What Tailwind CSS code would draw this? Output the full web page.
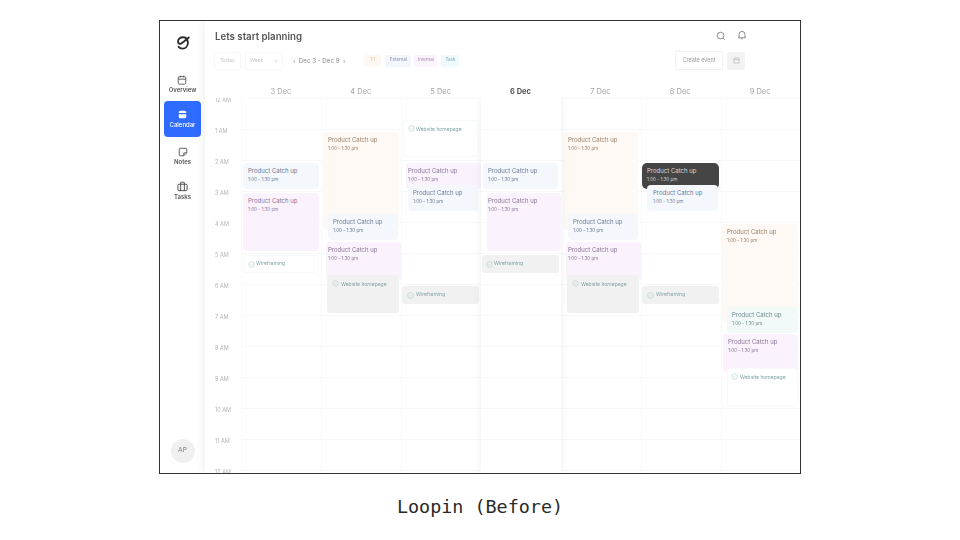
<!DOCTYPE html>
<html lang="en">
<head>
    <meta charset="UTF-8">
    <title>Loopin (Before)</title>
    <script src="https://cdn.jsdelivr.net/npm/@tailwindcss/browser@4"></script>
</head>
<body class="bg-white w-[960px] h-[540px] overflow-hidden font-['Inter',sans-serif]">
    <div class="pt-[20px] pl-[159px]">
        <!-- App frame -->
        <div class="w-[642px] h-[454px] border border-[#333] overflow-hidden">
            <div class="flex w-[640px] h-[452px] blur-[0.6px]">

                <!-- Sidebar -->
                <aside class="w-[45px] shrink-0 flex flex-col items-center">
                    <svg class="w-[16px] h-[16px] mt-[14px]" viewBox="0 0 16 16" fill="none" stroke="#2e2e2e" stroke-width="1.9" stroke-linecap="round">
                        <path d="M12.6 6.2C12.6 3.6 10.6 2.3 8 2.3 5.2 2.3 3 4 3 6.6c0 1.2.6 2 1.6 2.2C6.600 9.200 9.400 5.800 13.800 2.400"/>
                        <path d="M13 7.200c-.2 3.800-2.400 6.400-5.400 6.400-1.800 0-3.200-.6-4-1.800"/>
                    </svg>
                    <a class="mt-[24px] flex flex-col items-center text-[#555]">
                        <svg class="w-[10px] h-[10px]" viewBox="0 0 12 12" fill="none" stroke="#444" stroke-width="1">
                            <rect x="1.500" y="2" width="9" height="9" rx="1.500"/><path d="M1.500 5h9M4 .8v2M8 .8v2"/>
                        </svg>
                        <span class="text-[6px] leading-[8px] mt-[1px] font-semibold">Overview</span>
                    </a>
                    <a class="mt-[7px] w-[37px] h-[36px] rounded-[4px] bg-[#2f6bff] flex flex-col items-center justify-center text-white">
                        <svg class="w-[9px] h-[9px]" viewBox="0 0 12 12" fill="#fff">
                            <path d="M1 3a2 2 0 0 1 2-2h6a2 2 0 0 1 2 2v1H1zM1 5.500h10V9a2 2 0 0 1-2 2H3a2 2 0 0 1-2-2z"/>
                        </svg>
                        <span class="text-[6px] leading-[8px] mt-[2px] font-medium">Calendar</span>
                    </a>
                    <a class="mt-[10px] flex flex-col items-center text-[#555]">
                        <svg class="w-[10px] h-[10px]" viewBox="0 0 12 12" fill="none" stroke="#444" stroke-width="1">
                            <path d="M1.500 2.500a1 1 0 0 1 1-1h7a1 1 0 0 1 1 1V7l-3.500 3.500h-4.500a1 1 0 0 1-1-1zM10.500 7H7v3.500"/>
                        </svg>
                        <span class="text-[6px] leading-[8px] mt-[1px] font-semibold">Notes</span>
                    </a>
                    <a class="mt-[15px] flex flex-col items-center text-[#555]">
                        <svg class="w-[11px] h-[11px]" viewBox="0 0 12 12" fill="none" stroke="#444" stroke-width="1">
                            <rect x="1" y="3.500" width="10" height="7" rx="1.200"/><path d="M4 3.500V2a.7.7 0 0 1 .7-.7h2.600A.7.7 0 0 1 8 2v1.500M4 3.500v7M8 3.500v7"/>
                        </svg>
                        <span class="text-[6px] leading-[8px] mt-[1px] font-semibold">Tasks</span>
                    </a>
                    <div class="mt-auto mb-[10px] w-[24px] h-[24px] rounded-full bg-[#f0f0f0] flex items-center justify-center text-[6.500px] font-medium text-[#8a8a8a]">AP</div>
                </aside>

                <!-- Main -->
                <main class="flex-1 min-w-0 flex flex-col shadow-[-3px_0_8px_rgba(0,0,0,0.05)]">
                    <header class="h-[28px] shrink-0 flex items-center pl-[10px]">
                        <h1 class="text-[9.700px] font-semibold text-[#555] mt-[4px]">Lets start planning</h1>
                        <svg class="ml-auto w-[10px] h-[10px] mt-[2px] translate-x-[1px]" viewBox="0 0 12 12" fill="none" stroke="#777" stroke-width="1"><circle cx="5.500" cy="5.500" r="4"/><path d="M8.500 8.500l2 2"/></svg>
                        <svg class="ml-[12px] mr-[53px] w-[10px] h-[10px]" viewBox="0 0 12 12" fill="none" stroke="#777" stroke-width="1"><path d="M2.500 8.500V5.200a3.500 3.500 0 0 1 7 0v3.300l.8.800H1.700zM5 10.500h2"/></svg>
                    </header>
                    <div class="h-[19px] mt-[2px] shrink-0 flex items-center pl-[9px]">
                        <span class="w-[27px] h-[18px] border border-[#f7f7f7] rounded-[2px] flex items-center justify-center text-[5px] text-[#c4c4c4]">Today</span>
                        <span class="ml-[4px] w-[38px] h-[18px] border border-[#f7f7f7] rounded-[2px] flex items-center justify-between px-[4px] text-[5px] text-[#c4c4c4]">Week <svg class="w-[4px] h-[4px]" viewBox="0 0 6 6" fill="none" stroke="#aaa"><path d="M1 2l2 2 2-2"/></svg></span>
                        <span class="ml-[10px] text-[6.200px] text-[#888] whitespace-pre">‹  Dec 3 - Dec 9  ›</span>
                        <span class="ml-[19px] w-[17px] h-[12px] rounded-[2px] bg-[#fef8f3] flex items-center justify-center text-[4.500px] text-[#dcb690]">1:1</span>
                        <span class="ml-[4px] w-[26px] h-[12px] rounded-[2px] bg-[#f3f6fc] flex items-center justify-center text-[4.500px] text-[#7f8cab]">External</span>
                        <span class="ml-[3px] w-[23px] h-[12px] rounded-[2px] bg-[#fbf3fe] flex items-center justify-center text-[4.500px] text-[#a986b0]">Internal</span>
                        <span class="ml-[4px] w-[18px] h-[12px] rounded-[2px] bg-[#f0f9fb] flex items-center justify-center text-[4.500px] text-[#77abb5]">Task</span>
                        <span class="ml-auto w-[48px] h-[19px] border border-[#f1f1f1] rounded-[2px] flex items-center justify-center text-[5.500px] text-[#999]">Create event</span>
                        <span class="ml-[4px] mr-[55px] w-[18px] h-[18px] rounded-[2px] bg-[#f3f3f3] flex items-center justify-center">
                            <svg class="w-[7px] h-[7px]" viewBox="0 0 8 8" fill="none" stroke="#b4b4b4" stroke-width=".8"><rect x="1" y="1" width="6" height="6" rx="1"/><path d="M1 3h6"/></svg>
                        </span>
                    </div>

                    <!-- Day headers -->
                    <div class="h-[28px] shrink-0 flex pl-[36px] text-[7.500px] text-[#a5a5a5]">
                        <div class="w-[80px] pt-[17px] text-center leading-[10px]">3 Dec</div>
                        <div class="w-[80px] pt-[17px] text-center leading-[10px]">4 Dec</div>
                        <div class="w-[80px] pt-[17px] text-center leading-[10px]">5 Dec</div>
                        <div class="w-[80px] pt-[17px] text-center leading-[10px] font-bold text-[#555]">6 Dec</div>
                        <div class="w-[80px] pt-[17px] text-center leading-[10px]">7 Dec</div>
                        <div class="w-[80px] pt-[17px] text-center leading-[10px]">8 Dec</div>
                        <div class="w-[80px] pt-[17px] text-center leading-[10px]">9 Dec</div>
                    </div>

                    <!-- Week grid -->
                    <div class="flex-1 min-h-0 flex overflow-hidden">
                        <div class="w-[36px] shrink-0 text-[5.500px] text-[#b4b4b4] pl-[10px]">
                            <div class="h-[31px] leading-[5px]">12 AM</div>
                            <div class="h-[31px] leading-[5px]">1 AM</div>
                            <div class="h-[31px] leading-[5px]">2 AM</div>
                            <div class="h-[31px] leading-[5px]">3 AM</div>
                            <div class="h-[31px] leading-[5px]">4 AM</div>
                            <div class="h-[31px] leading-[5px]">5 AM</div>
                            <div class="h-[31px] leading-[5px]">6 AM</div>
                            <div class="h-[31px] leading-[5px]">7 AM</div>
                            <div class="h-[31px] leading-[5px]">8 AM</div>
                            <div class="h-[31px] leading-[5px]">9 AM</div>
                            <div class="h-[31px] leading-[5px]">10 AM</div>
                            <div class="h-[31px] leading-[5px]">11 AM</div>
                            <div class="h-[31px] leading-[5px]">12 AM</div>
                        </div>
                        <div class="relative w-[560px] shrink-0">
                            <!-- Hour lines -->
                            <div class="absolute inset-0 grid grid-rows-[repeat(13,31px)]">
                                <div class="border-t border-[#f8f8f8]"></div><div class="border-t border-[#f8f8f8]"></div><div class="border-t border-[#f8f8f8]"></div><div class="border-t border-[#f8f8f8]"></div><div class="border-t border-[#f8f8f8]"></div><div class="border-t border-[#f8f8f8]"></div><div class="border-t border-[#f8f8f8]"></div><div class="border-t border-[#f8f8f8]"></div><div class="border-t border-[#f8f8f8]"></div><div class="border-t border-[#f8f8f8]"></div><div class="border-t border-[#f8f8f8]"></div><div class="border-t border-[#f8f8f8]"></div><div class="border-t border-[#f8f8f8]"></div>
                            </div>
                            <div class="relative flex h-full">

                                <!-- 3 Dec -->
                                <div class="relative w-[80px] border-l border-[#f9f9f9]">
                                    <div class="absolute left-[1px] top-[65px] w-[76px] h-[26px] rounded-[4px] bg-[#f4f7fc] pl-[5px] pt-[4px]">
                                        <p class="text-[6px] leading-[8px] text-[#6d7a95] whitespace-nowrap">Product Catch up</p><p class="text-[4.500px] leading-[8px] mt-[1px] text-[#6d7a95] whitespace-nowrap">1:00 - 1:30 pm</p>
                                    </div>
                                    <div class="absolute left-[1px] top-[95px] w-[76px] h-[58px] rounded-[4px] bg-[#faf3fe] pl-[5px] pt-[4px]">
                                        <p class="text-[6px] leading-[8px] text-[#8b7595] whitespace-nowrap">Product Catch up</p><p class="text-[4.500px] leading-[8px] mt-[1px] text-[#8b7595] whitespace-nowrap">1:00 - 1:30 pm</p>
                                    </div>
                                    <div class="absolute left-[1px] top-[157px] w-[76px] h-[18px] rounded-[3px] bg-white border border-[#f6fafa] pl-[4px] flex items-center gap-[1px]">
                                        <svg class="w-[7px] h-[7px] shrink-0" viewBox="0 0 8 8" fill="none" stroke="#a9c9c6" stroke-width=".6"><circle cx="4" cy="4" r="3.200"/><path d="M2.500 4l1 1 2-2"/></svg>
                                        <span class="text-[5px] text-[#7fa4a2] whitespace-nowrap">Wireframing</span>
                                    </div>
                                </div>

                                <!-- 4 Dec -->
                                <div class="relative w-[80px] border-l border-[#f9f9f9]">
                                    <div class="absolute left-[1px] top-[34px] w-[76px] h-[98px] rounded-[4px] bg-[#fef9f5] pl-[5px] pt-[4px]">
                                        <p class="text-[6px] leading-[8px] text-[#9a7f65] whitespace-nowrap">Product Catch up</p><p class="text-[4.500px] leading-[8px] mt-[1px] text-[#9a7f65] whitespace-nowrap">1:00 - 1:30 pm</p>
                                    </div>
                                    <div class="absolute left-[6px] top-[116px] w-[70px] h-[26px] rounded-[4px] bg-[#f4f7fc] pl-[5px] pt-[4px]">
                                        <p class="text-[6px] leading-[8px] text-[#6d7a95] whitespace-nowrap">Product Catch up</p><p class="text-[4.500px] leading-[8px] mt-[1px] text-[#6d7a95] whitespace-nowrap">1:00 - 1:30 pm</p>
                                    </div>
                                    <div class="absolute left-[4px] top-[144px] w-[76px] h-[38px] rounded-[4px] bg-[#faf3fe] pl-[2px] pt-[4px]">
                                        <p class="text-[6px] leading-[8px] text-[#8b7595] whitespace-nowrap">Product Catch up</p><p class="text-[4.500px] leading-[8px] mt-[1px] text-[#8b7595] whitespace-nowrap">1:00 - 1:30 pm</p>
                                    </div>
                                    <div class="absolute left-[5px] top-[177px] w-[72px] h-[38px] rounded-[3px] bg-[#f1f1f1] pl-[5px] pt-[5px] flex items-start gap-[2px]">
                                        <svg class="w-[7px] h-[7px] shrink-0" viewBox="0 0 8 8" fill="none" stroke="#a9c9c6" stroke-width=".6"><circle cx="4" cy="4" r="3.200"/><path d="M2.500 4l1 1 2-2"/></svg>
                                        <span class="text-[5px] leading-[8px] text-[#7fa4a2] whitespace-nowrap">Website homepage</span>
                                    </div>
                                </div>

                                <!-- 5 Dec -->
                                <div class="relative w-[80px] border-l border-[#f9f9f9]">
                                    <div class="absolute left-[1px] top-[22px] w-[76px] h-[37px] rounded-[3px] bg-white border border-[#f6fafa] pl-[4px] pt-[4px] flex items-start gap-[1px]">
                                        <svg class="w-[7px] h-[7px] shrink-0" viewBox="0 0 8 8" fill="none" stroke="#a9c9c6" stroke-width=".6"><circle cx="4" cy="4" r="3.200"/><path d="M2.500 4l1 1 2-2"/></svg>
                                        <span class="text-[5px] leading-[8px] text-[#7fa4a2] whitespace-nowrap">Website homepage</span>
                                    </div>
                                    <div class="absolute left-[4px] top-[65px] w-[76px] h-[26px] rounded-[4px] bg-[#faf3fe] pl-[2px] pt-[4px]">
                                        <p class="text-[6px] leading-[8px] text-[#8b7595] whitespace-nowrap">Product Catch up</p><p class="text-[4.500px] leading-[8px] mt-[1px] text-[#8b7595] whitespace-nowrap">1:00 - 1:30 pm</p>
                                    </div>
                                    <div class="absolute left-[6px] top-[87px] w-[70px] h-[26px] rounded-[4px] bg-[#f4f7fc] pl-[5px] pt-[4px]">
                                        <p class="text-[6px] leading-[8px] text-[#6d7a95] whitespace-nowrap">Product Catch up</p><p class="text-[4.500px] leading-[8px] mt-[1px] text-[#6d7a95] whitespace-nowrap">1:00 - 1:30 pm</p>
                                    </div>
                                    <div class="absolute left-[0px] top-[188px] w-[77px] h-[18px] rounded-[3px] bg-[#f1f1f1] pl-[5px] flex items-center gap-[2px]">
                                        <svg class="w-[7px] h-[7px] shrink-0" viewBox="0 0 8 8" fill="none" stroke="#a9c9c6" stroke-width=".6"><circle cx="4" cy="4" r="3.200"/><path d="M2.500 4l1 1 2-2"/></svg>
                                        <span class="text-[5px] text-[#7fa4a2] whitespace-nowrap">Wireframing</span>
                                    </div>
                                </div>

                                <!-- 6 Dec, the current day sits raised -->
                                <div class="relative z-10 w-[80px] bg-white shadow-[0_0_8px_rgba(0,0,0,0.07)]">
                                    <div class="absolute left-0 right-0 top-[31px] border-t border-[#f8f8f8]"></div>
                                    <div class="absolute left-0 right-0 top-[62px] border-t border-[#f8f8f8]"></div>
                                    <div class="absolute left-0 right-0 top-[93px] border-t border-[#f8f8f8]"></div>
                                    <div class="absolute left-0 right-0 top-[124px] border-t border-[#f8f8f8]"></div>
                                    <div class="absolute left-0 right-0 top-[155px] border-t border-[#f8f8f8]"></div>
                                    <div class="absolute left-0 right-0 top-[186px] border-t border-[#f8f8f8]"></div>
                                    <div class="absolute left-0 right-0 top-[217px] border-t border-[#f8f8f8]"></div>
                                    <div class="absolute left-0 right-0 top-[248px] border-t border-[#f8f8f8]"></div>
                                    <div class="absolute left-0 right-0 top-[279px] border-t border-[#f8f8f8]"></div>
                                    <div class="absolute left-0 right-0 top-[310px] border-t border-[#f8f8f8]"></div>
                                    <div class="absolute left-0 right-0 top-[341px] border-t border-[#f8f8f8]"></div>
                                    <div class="absolute left-[2px] top-[65px] w-[75px] h-[26px] rounded-[4px] bg-[#f4f7fc] pl-[5px] pt-[4px]">
                                        <p class="text-[6px] leading-[8px] text-[#6d7a95] whitespace-nowrap">Product Catch up</p><p class="text-[4.500px] leading-[8px] mt-[1px] text-[#6d7a95] whitespace-nowrap">1:00 - 1:30 pm</p>
                                    </div>
                                    <div class="absolute left-[6px] top-[95px] w-[74px] h-[58px] rounded-[4px] bg-[#faf3fe] pl-[1px] pt-[4px]">
                                        <p class="text-[6px] leading-[8px] text-[#8b7595] whitespace-nowrap">Product Catch up</p><p class="text-[4.500px] leading-[8px] mt-[1px] text-[#8b7595] whitespace-nowrap">1:00 - 1:30 pm</p>
                                    </div>
                                    <div class="absolute left-[1px] top-[157px] w-[77px] h-[18px] rounded-[3px] bg-[#f1f1f1] pl-[4px] flex items-center gap-[1px]">
                                        <svg class="w-[7px] h-[7px] shrink-0" viewBox="0 0 8 8" fill="none" stroke="#a9c9c6" stroke-width=".6"><circle cx="4" cy="4" r="3.200"/><path d="M2.500 4l1 1 2-2"/></svg>
                                        <span class="text-[5px] text-[#7fa4a2] whitespace-nowrap">Wireframing</span>
                                    </div>
                                </div>

                                <!-- 7 Dec -->
                                <div class="relative w-[80px]">
                                    <div class="absolute left-[2px] top-[34px] w-[75px] h-[98px] rounded-[4px] bg-[#fef9f5] pl-[5px] pt-[4px]">
                                        <p class="text-[6px] leading-[8px] text-[#9a7f65] whitespace-nowrap">Product Catch up</p><p class="text-[4.500px] leading-[8px] mt-[1px] text-[#9a7f65] whitespace-nowrap">1:00 - 1:30 pm</p>
                                    </div>
                                    <div class="absolute left-[7px] top-[116px] w-[70px] h-[26px] rounded-[4px] bg-[#f4f7fc] pl-[5px] pt-[4px]">
                                        <p class="text-[6px] leading-[8px] text-[#6d7a95] whitespace-nowrap">Product Catch up</p><p class="text-[4.500px] leading-[8px] mt-[1px] text-[#6d7a95] whitespace-nowrap">1:00 - 1:30 pm</p>
                                    </div>
                                    <div class="absolute left-[5px] top-[144px] w-[76px] h-[38px] rounded-[4px] bg-[#faf3fe] pl-[2px] pt-[4px]">
                                        <p class="text-[6px] leading-[8px] text-[#8b7595] whitespace-nowrap">Product Catch up</p><p class="text-[4.500px] leading-[8px] mt-[1px] text-[#8b7595] whitespace-nowrap">1:00 - 1:30 pm</p>
                                    </div>
                                    <div class="absolute left-[6px] top-[177px] w-[72px] h-[38px] rounded-[3px] bg-[#f1f1f1] pl-[5px] pt-[5px] flex items-start gap-[2px]">
                                        <svg class="w-[7px] h-[7px] shrink-0" viewBox="0 0 8 8" fill="none" stroke="#a9c9c6" stroke-width=".6"><circle cx="4" cy="4" r="3.200"/><path d="M2.500 4l1 1 2-2"/></svg>
                                        <span class="text-[5px] leading-[8px] text-[#7fa4a2] whitespace-nowrap">Website homepage</span>
                                    </div>
                                </div>

                                <!-- 8 Dec -->
                                <div class="relative w-[80px] border-l border-[#f9f9f9]">
                                    <div class="absolute left-[0px] top-[65px] w-[77px] h-[26px] rounded-[5px] bg-[#454545] pl-[5px] pt-[4px]">
                                        <p class="text-[6px] leading-[8px] text-[#d8d8d8] whitespace-nowrap">Product Catch up</p><p class="text-[4.500px] leading-[8px] mt-[1px] text-[#d8d8d8] whitespace-nowrap">1:00 - 1:30 pm</p>
                                    </div>
                                    <div class="absolute left-[5px] top-[87px] w-[71px] h-[26px] rounded-[4px] bg-[#f4f7fc] pl-[6px] pt-[4px]">
                                        <p class="text-[6px] leading-[8px] text-[#6d7a95] whitespace-nowrap">Product Catch up</p><p class="text-[4.500px] leading-[8px] mt-[1px] text-[#6d7a95] whitespace-nowrap">1:00 - 1:30 pm</p>
                                    </div>
                                    <div class="absolute left-[0px] top-[188px] w-[77px] h-[18px] rounded-[3px] bg-[#f1f1f1] pl-[5px] flex items-center gap-[2px]">
                                        <svg class="w-[7px] h-[7px] shrink-0" viewBox="0 0 8 8" fill="none" stroke="#a9c9c6" stroke-width=".6"><circle cx="4" cy="4" r="3.200"/><path d="M2.500 4l1 1 2-2"/></svg>
                                        <span class="text-[5px] text-[#7fa4a2] whitespace-nowrap">Wireframing</span>
                                    </div>
                                </div>

                                <!-- 9 Dec -->
                                <div class="relative w-[80px] border-l border-[#f9f9f9]">
                                    <div class="absolute left-[0px] top-[126px] w-[76px] h-[98px] rounded-[4px] bg-[#fef9f5] pl-[5px] pt-[4px]">
                                        <p class="text-[6px] leading-[8px] text-[#9a7f65] whitespace-nowrap">Product Catch up</p><p class="text-[4.500px] leading-[8px] mt-[1px] text-[#9a7f65] whitespace-nowrap">1:00 - 1:30 pm</p>
                                    </div>
                                    <div class="absolute left-[5px] top-[209px] w-[71px] h-[26px] rounded-[4px] bg-[#f2f9f9] pl-[5px] pt-[4px]">
                                        <p class="text-[6px] leading-[8px] text-[#6f8a8c] whitespace-nowrap">Product Catch up</p><p class="text-[4.500px] leading-[8px] mt-[1px] text-[#6f8a8c] whitespace-nowrap">1:00 - 1:30 pm</p>
                                    </div>
                                    <div class="absolute left-[1px] top-[236px] w-[75px] h-[39px] rounded-[4px] bg-[#faf3fe] pl-[5px] pt-[4px]">
                                        <p class="text-[6px] leading-[8px] text-[#8b7595] whitespace-nowrap">Product Catch up</p><p class="text-[4.500px] leading-[8px] mt-[1px] text-[#8b7595] whitespace-nowrap">1:00 - 1:30 pm</p>
                                    </div>
                                    <div class="absolute left-[5px] top-[270px] w-[71px] h-[38px] rounded-[3px] bg-white border border-[#f6fafa] pl-[3px] pt-[4px] flex items-start gap-[2px]">
                                        <svg class="w-[7px] h-[7px] shrink-0" viewBox="0 0 8 8" fill="none" stroke="#a9c9c6" stroke-width=".6"><circle cx="4" cy="4" r="3.200"/><path d="M2.500 4l1 1 2-2"/></svg>
                                        <span class="text-[5px] leading-[8px] text-[#7fa4a2] whitespace-nowrap">Website homepage</span>
                                    </div>
                                </div>

                            </div>
                        </div>
                    </div>
                </main>
            </div>
        </div>
    </div>

    <p class="mt-[22px] text-center text-[18.400px] leading-[22px] text-[#2a2a2a] font-['DejaVu_Sans_Mono',monospace]">Loopin (Before)</p>
</body>
</html>
